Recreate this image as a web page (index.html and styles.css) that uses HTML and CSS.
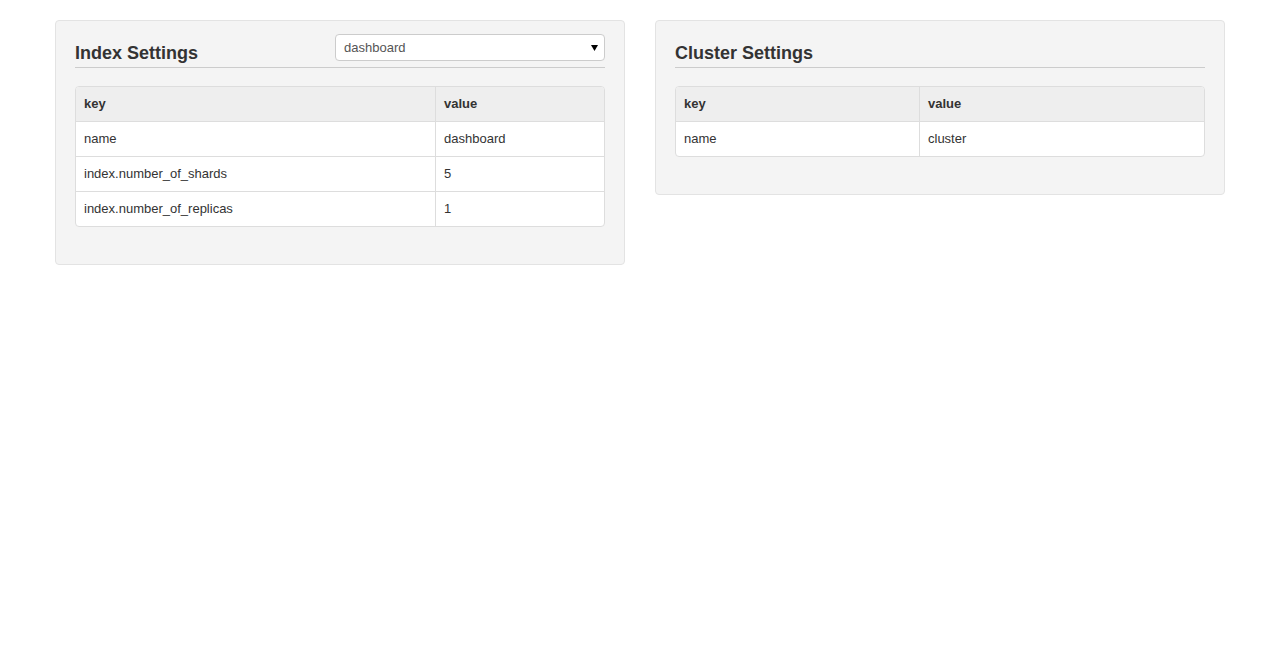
FILE: index.html
```html
<!DOCTYPE html>
<html>
<head>
<meta charset="utf-8">
<link rel="stylesheet" href="styles.css">
</head>
<body>
<div class="container">
  <section class="well">
    <div class="well-head">
      <h4 class="title">Index Settings</h4>
      <div class="select-wrap">
        <select class="select"><option>dashboard</option></select>
        <svg class="caret" width="7" height="6" viewBox="0 0 7 6"><path d="M0 0H7L3.5 6Z" fill="#000"/></svg>
      </div>
    </div>
    <table class="grid grid-index">
      <thead><tr><th class="k">key</th><th>value</th></tr></thead>
      <tbody>
        <tr><td class="k">name</td><td>dashboard</td></tr>
        <tr><td class="k">index.number_of_shards</td><td>5</td></tr>
        <tr><td class="k">index.number_of_replicas</td><td>1</td></tr>
      </tbody>
    </table>
  </section>
  <section class="well">
    <div class="well-head">
      <h4 class="title">Cluster Settings</h4>
    </div>
    <table class="grid grid-cluster">
      <thead><tr><th class="k">key</th><th>value</th></tr></thead>
      <tbody>
        <tr><td class="k">name</td><td>cluster</td></tr>
      </tbody>
    </table>
  </section>
</div>
</body>
</html>
```
FILE: styles.css
```css
* { box-sizing: border-box; }
html, body { margin: 0; padding: 0; background: #fff; }
body {
  font-family: "Liberation Sans", Arial, sans-serif;
  font-size: 13px;
  line-height: 1.428571;
  color: #333;
}
.container {
  width: 1170px;
  margin: 0 auto;
  padding-top: 20px;
  display: flex;
  gap: 30px;
  align-items: flex-start;
}
.well {
  width: 570px;
  background: #f4f4f4;
  border: 1px solid #e3e3e3;
  border-radius: 4px;
  padding: 19px;
}
.well-head {
  display: flex;
  justify-content: space-between;
  align-items: flex-start;
  border-bottom: 1px solid #cccccc;
  height: 28px;
  margin-bottom: 18px;
}
.title {
  margin: 0;
  font-size: 18px;
  font-weight: bold;
  line-height: 22px;
  padding-top: 2px;
  color: #333;
}
.select-wrap {
  position: relative;
  width: 270px;
  height: 27px;
  margin-top: -6px;
}
.select {
  appearance: none;
  -webkit-appearance: none;
  width: 100%;
  height: 27px;
  border: 1px solid #cccccc;
  border-radius: 4px;
  background: #fff;
  padding: 0 8px;
  font-family: "Liberation Sans", Arial, sans-serif;
  font-size: 13px;
  color: #555;
  outline: none;
}
.caret {
  position: absolute;
  right: 7px;
  top: 11px;
  pointer-events: none;
}
.grid {
  width: 100%;
  border-collapse: separate;
  border-spacing: 0;
  border: 1px solid #dddddd;
  border-radius: 4px;
  margin-bottom: 18px;
  background: #fff;
  overflow: hidden;
}
.grid th, .grid td {
  text-align: left;
  padding: 8px;
  line-height: 18px;
  height: 35px;
  border-top: 1px solid #dddddd;
  border-left: 1px solid #dddddd;
}
.grid th {
  background: #eeeeee;
  font-weight: bold;
  border-top: 0;
  height: 34px;
}
.grid .k { border-left: 0; }
.grid-index .k { width: 359px; }
.grid-cluster .k { width: 243px; }
```
